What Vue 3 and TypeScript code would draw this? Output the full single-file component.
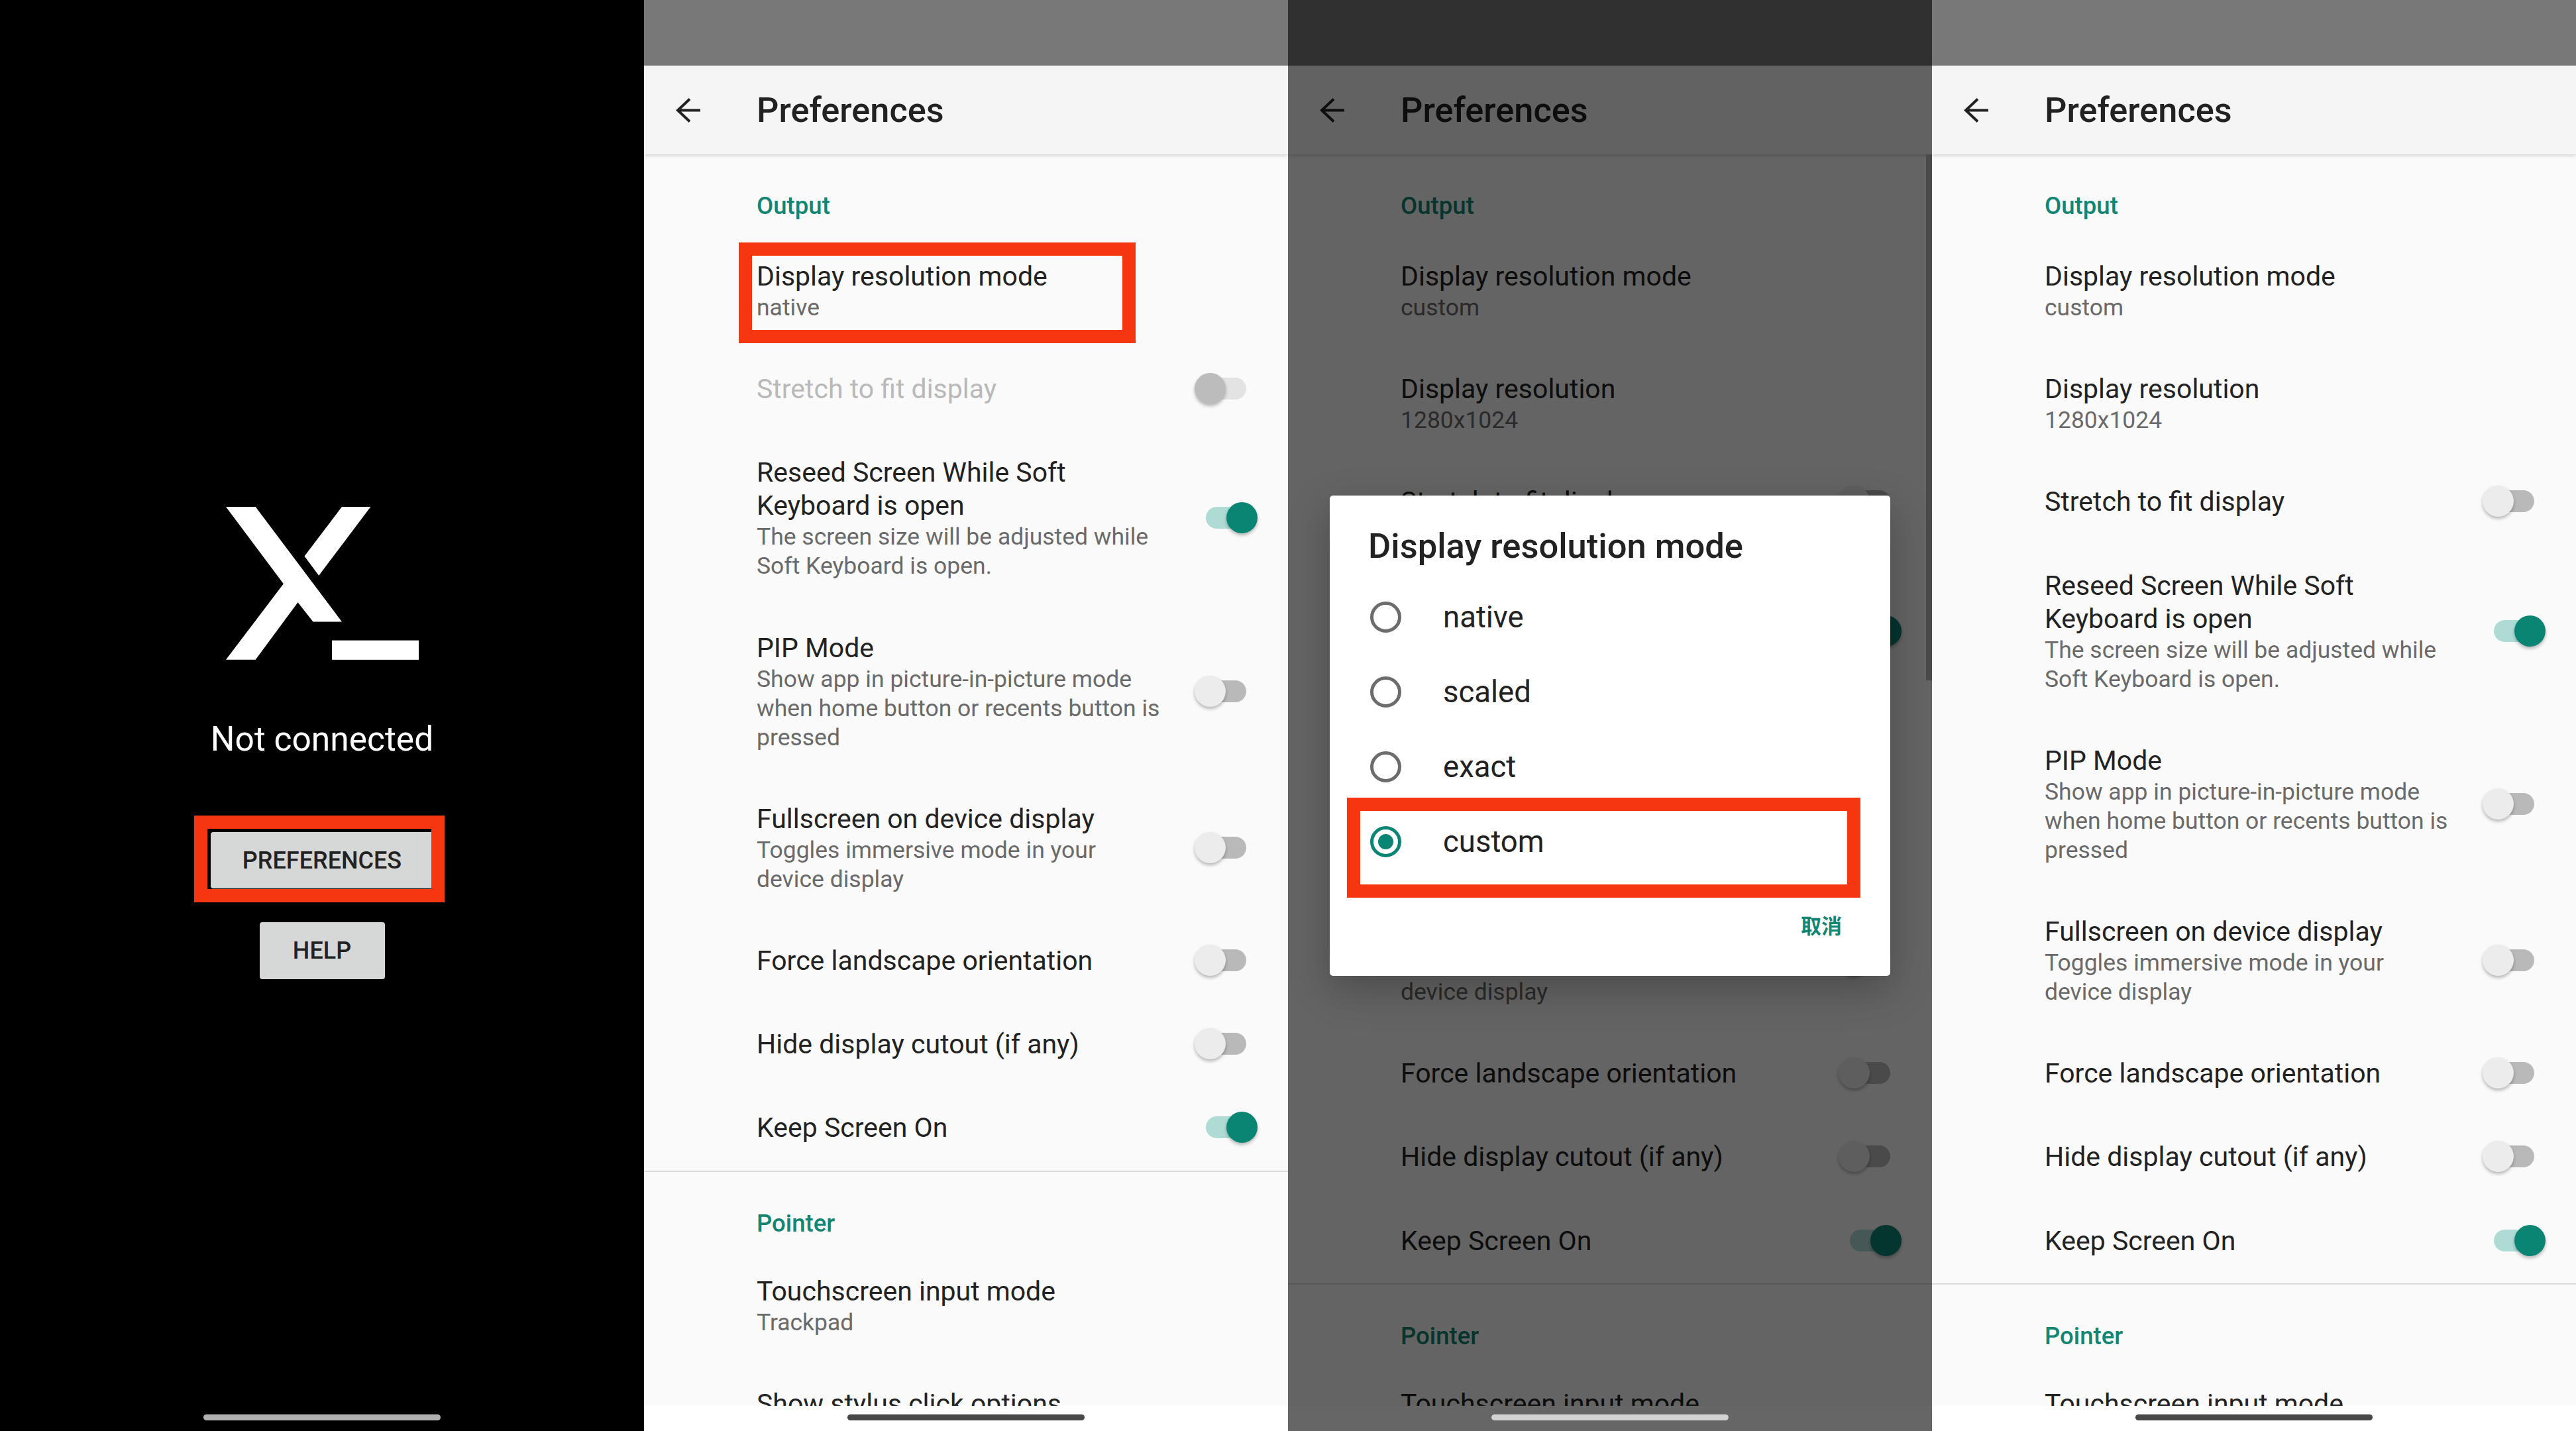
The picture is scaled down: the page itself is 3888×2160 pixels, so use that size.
<template>
  <div class="board">
    <!-- launch screen -->
    <section class="screen home">
      <svg class="logo" viewBox="548 200 469 405" preserveAspectRatio="none">
        <path d="M548 200H620L830 503H760L723 452L620 603H548L688 403Z" />
        <path d="M830 200H900L774 381L739 330Z" />
        <rect x="806" y="552" width="211" height="51" />
      </svg>
      <div class="status">Not connected</div>
      <button class="btn btn-pref">PREFERENCES</button>
      <button class="btn btn-help">HELP</button>
      <div class="mark mark-pref"></div>
      <div class="nav nav-dark"><span class="pill pill-light"></span></div>
    </section>

    <!-- native mode -->
    <section class="screen">
      <PrefsList :rows="nativeRows" />
      <div class="mark mark-mode"></div>
    </section>

    <!-- mode dialog -->
    <section class="screen">
      <PrefsList :rows="customRows" />
      <div class="dim"></div>
      <div class="scrollbar"></div>
      <div class="dialog">
        <h2 class="dialog-title">Display resolution mode</h2>
        <div v-for="opt in modes" :key="opt" class="option">
          <span class="radio" :class="{ checked: opt === 'custom' }"></span>
          <span>{{ opt }}</span>
        </div>
        <div class="dialog-actions"><span class="cancel">取消</span></div>
      </div>
      <div class="mark mark-option"></div>
      <div class="nav nav-clear"><span class="pill pill-pale"></span></div>
    </section>

    <!-- custom mode -->
    <section class="screen">
      <PrefsList :rows="customRows" />
    </section>
  </div>
</template>

<script setup lang="ts">
import { defineComponent, h, type PropType } from 'vue'

interface Row {
  section?: string
  title?: string
  sub?: string
  toggle?: 'on' | 'off'
  disabled?: boolean
  divider?: boolean
}

const modes = ['native', 'scaled', 'exact', 'custom']

const afterMode: Row[] = [
  { title: 'Reseed Screen While Soft\nKeyboard is open', sub: 'The screen size will be adjusted while\nSoft Keyboard is open.', toggle: 'on' },
  { title: 'PIP Mode', sub: 'Show app in picture-in-picture mode\nwhen home button or recents button is\npressed', toggle: 'off' },
  { title: 'Fullscreen on device display', sub: 'Toggles immersive mode in your\ndevice display', toggle: 'off' },
  { title: 'Force landscape orientation', toggle: 'off' },
  { title: 'Hide display cutout (if any)', toggle: 'off' },
  { title: 'Keep Screen On', toggle: 'on' },
  { divider: true },
  { section: 'Pointer' },
  { title: 'Touchscreen input mode', sub: 'Trackpad' },
  { title: 'Show stylus click options', sub: 'Stylus' }
]

const nativeRows: Row[] = [
  { section: 'Output' },
  { title: 'Display resolution mode', sub: 'native' },
  { title: 'Stretch to fit display', toggle: 'off', disabled: true },
  ...afterMode
]

const customRows: Row[] = [
  { section: 'Output' },
  { title: 'Display resolution mode', sub: 'custom' },
  { title: 'Display resolution', sub: '1280x1024' },
  { title: 'Stretch to fit display', toggle: 'off' },
  ...afterMode
]

const arrow = () =>
  h('svg', { class: 'back', viewBox: '0 0 37 37' }, [
    h('path', { d: 'M37 18.5H3M21 1.5L3 18.5L21 35.5', fill: 'none', stroke: '#222', 'stroke-width': 4 })
  ])

// shared preferences page, only the rows change per screen
const PrefsList = defineComponent({
  props: { rows: { type: Array as PropType<Row[]>, required: true } },
  setup(props) {
    return () =>
      h('div', { class: 'prefs' }, [
        h('div', { class: 'statusbar' }),
        h('header', { class: 'appbar' }, [arrow(), h('h1', { class: 'appbar-title' }, 'Preferences')]),
        h(
          'div',
          { class: 'list' },
          props.rows.map((row, i) => {
            if (row.divider) return h('div', { class: 'divider', key: i })
            if (row.section) return h('div', { class: 'section', key: i }, row.section)
            return h('div', { class: ['row', { disabled: row.disabled }], key: i }, [
              h('div', { class: 'text' }, [
                h('div', { class: 'title' }, row.title),
                row.sub ? h('div', { class: 'sub' }, row.sub) : null
              ]),
              row.toggle
                ? h('span', { class: ['switch', row.toggle, { disabled: row.disabled }] }, [
                    h('i', { class: 'track' }),
                    h('i', { class: 'thumb' })
                  ])
                : null
            ])
          })
        ),
        h('div', { class: 'nav' }, [h('span', { class: 'pill' })])
      ])
  }
})
</script>

<style>
html,
body {
  margin: 0;
  background: #000;
}

.prefs {
  height: 100%;
  display: flex;
  flex-direction: column;
  background: #fafafa;
  position: relative;
}

.statusbar {
  height: 99px;
  flex: none;
  background: #787878;
}

.appbar {
  height: 134px;
  flex: none;
  display: flex;
  align-items: center;
  background: #f5f5f5;
  box-shadow: 0 2px 5px rgba(0, 0, 0, 0.16);
  position: relative;
  z-index: 1;
}

.back {
  width: 37px;
  height: 37px;
  margin-left: 48px;
  margin-right: 85px;
}

.appbar-title {
  margin: 0;
  font-size: 52.3px;
  font-weight: 500;
  color: #222;
}

.list {
  flex: 1;
  min-height: 0;
  overflow: hidden;
}

.section {
  height: 122px;
  box-sizing: border-box;
  padding: 56px 0 0 170px;
  line-height: 44px;
  font-size: 36.6px;
  font-weight: 500;
  color: #128672;
}

.divider + .section {
  height: 118px;
}

.divider {
  height: 2px;
  background: #dcdcdc;
}

.row {
  display: flex;
  align-items: center;
  justify-content: space-between;
  padding: 37px 46px 39.2px 170px;
}

.title {
  font-size: 41px;
  line-height: 50px;
  color: #222;
  white-space: pre-line;
}

.sub {
  font-size: 35.5px;
  line-height: 44px;
  color: #6a6a6a;
  white-space: pre-line;
}

.row.disabled .title {
  color: #b9b9b9;
}

.switch {
  position: relative;
  flex: none;
  width: 95px;
  height: 48px;
}

.track {
  position: absolute;
  top: 7px;
  width: 70px;
  height: 33px;
  border-radius: 17px;
}

.thumb {
  position: absolute;
  top: 0;
  width: 47px;
  height: 47px;
  border-radius: 50%;
  box-shadow: 0 3px 5px rgba(0, 0, 0, 0.28);
}

.switch.off .track {
  left: 8px;
  background: #b9b9b9;
}

.switch.off .thumb {
  left: 0;
  background: #ececec;
}

.switch.on .track {
  left: 17px;
  background: #aedcd5;
}

.switch.on .thumb {
  right: 0;
  background: #0a8573;
}

.switch.disabled .track {
  background: #e3e3e3;
}

.switch.disabled .thumb {
  background: #bcbcbc;
}

.nav {
  position: absolute;
  left: 0;
  right: 0;
  bottom: 0;
  height: 38px;
  background: #fff;
  display: flex;
  justify-content: center;
  z-index: 2;
}

.pill {
  width: 358px;
  height: 9px;
  margin-top: 13px;
  border-radius: 5px;
  background: #484848;
}
</style>

<style scoped>
.board {
  width: 3888px;
  height: 2160px;
  display: grid;
  grid-template-columns: repeat(4, 972px);
  font-family: Roboto, "Noto Sans CJK SC", sans-serif;
  overflow: hidden;
}

.screen {
  position: relative;
  height: 2160px;
  overflow: hidden;
}

.home {
  background: #000;
  display: flex;
  flex-direction: column;
  align-items: center;
}

.logo {
  width: 291px;
  height: 232px;
  margin-top: 765px;
  fill: #fff;
}

.status {
  margin-top: 89px;
  font-size: 51.5px;
  line-height: 60px;
  color: #fff;
}

.btn {
  border: none;
  padding: 0;
  background: #d6d7d7;
  color: #222;
  border-radius: 4px;
  font-family: inherit;
  font-size: 36px;
  font-weight: 500;
}

.btn-pref {
  width: 336px;
  height: 85px;
  margin-top: 110px;
}

.btn-help {
  width: 189px;
  height: 86px;
  margin-top: 51px;
}

.nav-dark {
  background: #000;
}

.nav-clear {
  background: transparent;
}

.pill-light {
  background: #b0b0b0;
}

.pill-pale {
  background: #d2d2d2;
}

.mark {
  position: absolute;
  box-sizing: border-box;
  border: 20px solid #f63511;
  z-index: 3;
}

.mark-pref {
  left: 293px;
  top: 1231px;
  width: 378px;
  height: 131px;
}

.mark-mode {
  left: 143px;
  top: 366px;
  width: 599px;
  height: 152px;
}

.mark-option {
  left: 89px;
  top: 1204px;
  width: 775px;
  height: 151px;
}

.dim {
  position: absolute;
  inset: 0;
  z-index: 2;
  background: rgba(0, 0, 0, 0.6);
}

.scrollbar {
  position: absolute;
  right: 0;
  top: 233px;
  width: 9px;
  height: 794px;
  z-index: 2;
  background: #4a4a4a;
}

.dialog {
  position: absolute;
  left: 63px;
  top: 748px;
  width: 846px;
  height: 725px;
  box-sizing: border-box;
  padding: 0 58px;
  z-index: 2;
  background: #fff;
  border-radius: 5px;
  box-shadow: 0 20px 60px rgba(0, 0, 0, 0.25);
}

.dialog-title {
  margin: 45px 0 20px;
  font-size: 52.5px;
  line-height: 62px;
  font-weight: 500;
  color: #222;
}

.option {
  height: 113px;
  display: flex;
  align-items: center;
  font-size: 45.5px;
  color: #222;
}

.radio {
  width: 47px;
  height: 47px;
  box-sizing: border-box;
  margin: 0 63px 0 3px;
  border: 5px solid #6c6c6c;
  border-radius: 50%;
}

.radio.checked {
  border-color: #0a8573;
  background: radial-gradient(circle, #0a8573 0 11px, #fff 12px);
}

.dialog-actions {
  display: flex;
  justify-content: flex-end;
  margin-top: 52px;
  padding-right: 15px;
}

.cancel {
  font-size: 31px;
  line-height: 40px;
  font-weight: 700;
  color: #128672;
}
</style>
